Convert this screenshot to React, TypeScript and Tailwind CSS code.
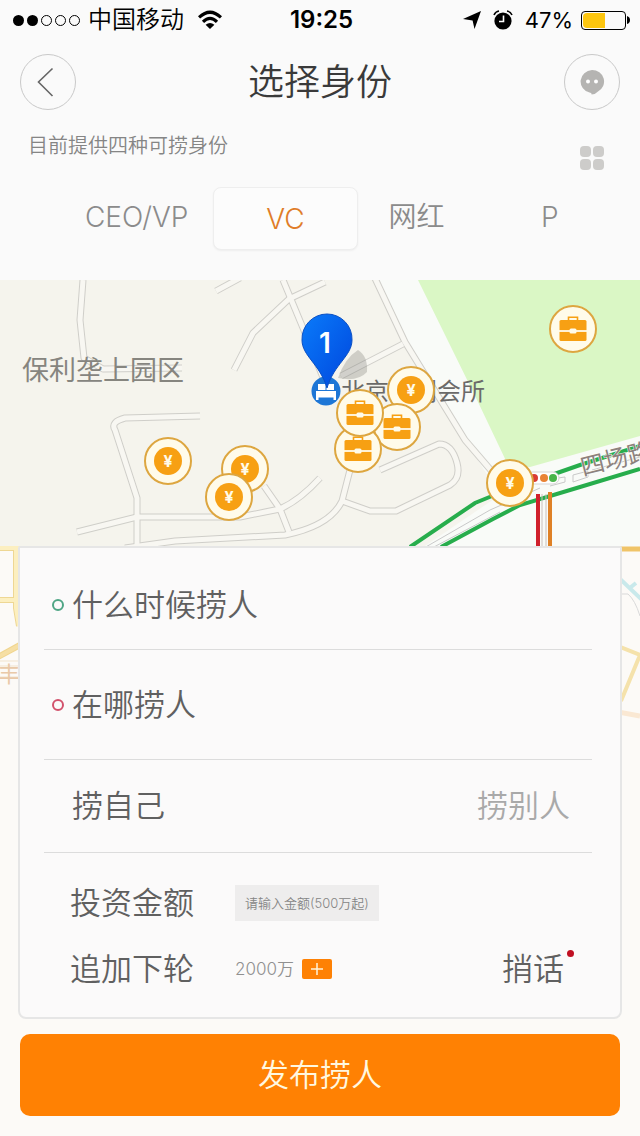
import { useState } from "react";

type Marker = { id: number; type: "coin" | "case"; x: number; y: number };

const MAP_WIDTH = 640;

const tabs = ["CEO/VP", "VC", "网红", "P"];

const markers: Marker[] = [
  { id: 1, type: "coin", x: 168, y: 181 },
  { id: 2, type: "coin", x: 245, y: 189 },
  { id: 3, type: "coin", x: 229, y: 217 },
  { id: 4, type: "coin", x: 411, y: 110 },
  { id: 5, type: "case", x: 397, y: 147 },
  { id: 6, type: "case", x: 358, y: 169 },
  { id: 7, type: "case", x: 360, y: 133 },
  { id: 8, type: "coin", x: 510, y: 203 },
  { id: 9, type: "case", x: 573, y: 49 },
];

const roads = [
  "M83 0L80 40L84 78L103 89L182 88",
  "M216 11L240 -2",
  "M234 90L253 53L289 19L325 2",
  "M283 0L303 48L326 105",
  "M372 -8L405 62L465 160L495 195",
  "M403 64L341 96",
  "M200 136L125 138Q110 142 115 150L137 218V266",
  "M77 252L137 237H240L280 229Q300 220 320 198",
  "M264 206L280 229L289 252",
  "M125 268L175 261L285 255Q330 246 342 221L351 186",
  "M342 221L370 231H396L450 205Q461 198 457 183Q452 164 439 164L380 190",
];

function StatusBar() {
  return (
    <div className="grid h-10 grid-cols-[1fr_auto_1fr] items-center pr-[10px] pl-[13px] text-black">
      <div className="flex items-center text-2xl leading-none">
        <div className="flex gap-[3px]">
          <span className="size-[11px] rounded-full bg-black" />
          <span className="size-[11px] rounded-full bg-black" />
          <span className="size-[11px] rounded-full border border-black" />
          <span className="size-[11px] rounded-full border border-black" />
          <span className="size-[11px] rounded-full border border-black" />
        </div>
        <span className="ml-2 font-[350]">中国移动</span>
        <svg className="ml-[14px] h-5 w-6" viewBox="0 0 24 20">
          <g fill="none" stroke="black" strokeWidth="3.2">
            <path d="M1 7.4Q12 -3 23 7.4" />
            <path d="M5 11.8Q12 5 19 11.8" />
          </g>
          <path d="M7.6 14.8Q12 11 16.4 14.8L12 19Z" />
        </svg>
      </div>

      <span className="text-2xl leading-none font-semibold">19:25</span>

      <div className="flex items-center justify-end text-[22px] leading-none">
        <svg className="h-5 w-[18px]" viewBox="0 0 18 20">
          <path d="M18 1L11.5 19L9.6 10.6L0 9Z" />
        </svg>
        <svg className="ml-3 size-5" viewBox="0 0 20 20">
          <circle cx="10" cy="11" r="8.6" />
          <path
            d="M1 5Q2.500 1.500 6 1M19 5Q17.500 1.500 14 1"
            fill="none"
            stroke="black"
            strokeWidth="1.6"
          />
          <path
            d="M10.500 5.500V11.500H6"
            fill="none"
            stroke="white"
            strokeWidth="1.6"
          />
        </svg>
        <span className="ml-3 font-normal">47%</span>
        <div className="ml-2 flex h-[19px] w-[45px] rounded border border-black p-px">
          <div className="w-[22px] rounded-l-sm bg-[#fdc60f]" />
        </div>
        <svg className="ml-px h-2 w-[3px]" viewBox="0 0 3 8">
          <path d="M0 0Q3 1 3 4T0 8Z" />
        </svg>
      </div>
    </div>
  );
}

function Header() {
  return (
    <header className="flex h-[84px] items-center justify-between px-5">
      <button
        aria-label="返回"
        className="flex size-14 items-center justify-center rounded-full border border-[#c9c9c9]"
      >
        <svg className="size-8" viewBox="0 0 32 32">
          <path
            d="M20.500 2.500L6.500 16L20.500 30"
            fill="none"
            stroke="#666"
            strokeWidth="1.6"
          />
        </svg>
      </button>
      <h1 className="text-4xl text-[#3a3a3a]">选择身份</h1>
      <button
        aria-label="消息"
        className="flex size-14 items-center justify-center rounded-full border border-[#c9c9c9]"
      >
        <svg className="size-7" viewBox="0 0 28 28">
          <path
            d="M14 2A12 11.500 0 0 0 11.500 24.600Q14 25 13.500 26.500Q18 26 20 23.500A12 11.500 0 0 0 14 2Z"
            fill="#b5b4b2"
          />
          <circle cx="10" cy="13.500" r="2" fill="white" />
          <circle cx="18" cy="13.500" r="2" fill="white" />
        </svg>
      </button>
    </header>
  );
}

function MapMarker({ type, x, y }: Marker) {
  return (
    <button
      aria-label={type === "coin" ? "投资人" : "职位"}
      className="absolute flex size-12 -translate-x-1/2 -translate-y-1/2 items-center justify-center rounded-full border-2 border-[#dda640] bg-[#fffbea]"
      style={{ left: `${(x / MAP_WIDTH) * 100}%`, top: y }}
    >
      {type === "coin" ? (
        <span className="flex size-7 items-center justify-center rounded-full bg-[#f7a013] text-base leading-none font-bold text-[#fffbea]">
          ¥
        </span>
      ) : (
        <svg className="size-7" viewBox="0 0 28 28">
          <path
            d="M9.500 6V2.200H18.500V6"
            fill="none"
            stroke="#f7a013"
            strokeWidth="1.600"
          />
          <rect x="0.500" y="5" width="27" height="21" rx="1.500" fill="#f7a013" />
          <path d="M0 16H28" stroke="#fffbea" strokeWidth="1.800" />
          <rect x="10.500" y="13.500" width="7" height="5" rx="1.500" fill="#fffbea" />
        </svg>
      )}
    </button>
  );
}

function CityMap() {
  return (
    <div className="relative h-[266px] overflow-hidden bg-[#f5f4ed]">
      <svg
        className="h-full w-full"
        viewBox="0 0 640 266"
        preserveAspectRatio="xMidYMid slice"
      >
        <defs>
          <linearGradient id="pin" x1="0" y1="0" x2="1" y2="1">
            <stop offset="0" stopColor="#0a7bfa" />
            <stop offset="1" stopColor="#0046dd" />
          </linearGradient>
        </defs>

        <path d="M376 0H640V266H425L500 215L465 160L405 62Z" fill="#f9fbf8" />
        <path d="M418 0H640V156L530 187L508 185L478 122Z" fill="#daf7c5" />

        <g fill="none" strokeLinejoin="round">
          {roads.map((d) => (
            <path key={d} d={d} stroke="#cfcec9" strokeWidth="7" />
          ))}
          {roads.map((d) => (
            <path key={d} d={d} stroke="#f8f7f2" strokeWidth="5" />
          ))}
        </g>

        {/* ring road with live traffic */}
        <g fill="none">
          <path
            d="M424 268L490 230L540 208M432 268L500 232M550 206L565 202V197L558 198M573 195L588 191V197L573 202ZM592 190L640 177"
            stroke="#c9c9c9"
          />
          <path
            d="M410 267L475 223L492 216L560 192L580 185L640 166M441 267L493 239L520 225L580 207L640 189"
            stroke="#27ad4c"
            strokeWidth="4"
          />
          <path d="M538 214V266" stroke="#d0202b" strokeWidth="4" />
          <path d="M542 214V266M546 214V266" stroke="#c9c0bc" />
          <path d="M550 212V266" stroke="#df8126" strokeWidth="4" />
        </g>
        <rect x="526" y="192" width="33" height="12" rx="6" fill="white" stroke="#d5d5d5" />
        <circle cx="534" cy="198" r="4" fill="#da3b34" />
        <circle cx="544" cy="198" r="4" fill="#e98335" />
        <circle cx="553" cy="198" r="4" fill="#48b44a" />
        <text
          x="583"
          y="196"
          transform="rotate(-14 583 196)"
          className="text-2xl font-normal"
          fill="#8d827d"
          stroke="#fbfbf8"
          strokeWidth="1"
          paintOrder="stroke"
        >
          四场路
        </text>

        <text x="22" y="100" className="text-[27px] font-normal" fill="#86857f">
          保利垄上园区
        </text>
        <path
          d="M338 98Q345 78 358 70Q368 76 367 92Q358 102 338 98Z"
          fill="#77776f"
          fillOpacity="0.3"
        />
        <text x="341" y="120" className="text-2xl font-normal" fill="#6b6a69">
          北京保利会所
        </text>

        <circle cx="326" cy="111" r="14.500" fill="#1d76d6" />
        <path
          d="M318 104H334V110H318ZM316 111H336V120H333.500V117.500H318.500V120H316Z"
          fill="white"
        />
        <path d="M326 104V110" stroke="#1d76d6" />
        <path
          d="M327 34A25 25 0 0 1 352 60C352 76 334 84 327 108C320 84 302 76 302 60A25 25 0 0 1 327 34Z"
          fill="url(#pin)"
          stroke="#0b50c4"
        />
        <text
          x="325"
          y="73"
          textAnchor="middle"
          className="text-[28px] font-semibold"
          fill="white"
        >
          1
        </text>
      </svg>

      {markers.map((marker) => (
        <MapMarker key={marker.id} {...marker} />
      ))}
    </div>
  );
}

function MapEdges() {
  return (
    <>
      <svg className="absolute top-0 left-0 h-[200px] w-5" viewBox="0 0 20 200">
        <g fill="none" stroke="#eed794" strokeWidth="6">
          <path d="M0 2H20M16 2V62L19 80M0 54H14" />
          <path d="M-2 111L20 99" stroke="#f0d58e" />
        </g>
        <g fill="none" stroke="#fcefc0" strokeWidth="4">
          <path d="M0 2H20M16 2V62L19 80M0 54H14" />
          <path d="M-2 111L20 99" stroke="#f6dfa4" />
        </g>
        <path d="M0 115H20M0 120H20M0 131H20" stroke="#f1e3cd" />
        <text x="-2" y="136" className="text-[22px] font-normal" fill="#e9c9a8">
          丰
        </text>
      </svg>
      <svg className="absolute top-0 right-0 h-[200px] w-[22px]" viewBox="0 0 22 200">
        <g fill="none">
          <path d="M0 3H22" stroke="#f0c468" strokeWidth="5" />
          <path d="M0 31L24 54M13 41L18 37" stroke="#c9e9eb" strokeWidth="4" />
          <path d="M0 48H10Q17 54 22 70" stroke="#d9d9d9" />
          <path d="M0 100L22 109L3 155" stroke="#f5e2ab" strokeWidth="4" />
          <path d="M0 166L22 170" stroke="#fae8d3" strokeWidth="5" />
        </g>
      </svg>
    </>
  );
}

export default function App() {
  const [activeTab, setActiveTab] = useState("VC");

  return (
    <main className="overflow-hidden bg-[#fafafa] font-['Inter','Noto_Sans_CJK_SC',sans-serif] font-[350] text-[#606060]">
      <StatusBar />
      <Header />

      <div className="flex h-[63px] items-start justify-between pr-9 pl-7">
        <p className="mt-2 text-xl text-[#858585]">目前提供四种可捞身份</p>
        <button aria-label="全部身份" className="mt-[22px] grid grid-cols-2 gap-[2px]">
          <span className="size-[11px] rounded bg-[#cdccca]" />
          <span className="size-[11px] rounded bg-[#cdccca]" />
          <span className="size-[11px] rounded bg-[#cdccca]" />
          <span className="size-[11px] rounded bg-[#cdccca]" />
        </button>
      </div>

      <nav className="grid h-[93px] grid-cols-[153fr_144fr_118fr_148fr] items-start pr-4 pl-[60px]">
        {tabs.map((tab) => (
          <button
            key={tab}
            onClick={() => setActiveTab(tab)}
            className={
              tab === activeTab
                ? "h-[63px] rounded-lg border border-[#eeeeee] bg-[#fcfcfc] text-[28px] text-[#e07c28] shadow-xs"
                : "h-[60px] text-[28px] text-[#8b8b8b]"
            }
          >
            {tab}
          </button>
        ))}
      </nav>

      <CityMap />

      <div className="relative bg-[#fcfaf7] pb-5">
        <MapEdges />

        <form
          onSubmit={(e) => e.preventDefault()}
          className="relative mx-[18px]"
        >
          <div className="rounded-t-xs rounded-b-lg border-2 border-[#e6e6e6] bg-[#fbfafa] pr-7 pb-[30px] pl-6 text-[31px] leading-9">
            <button
              type="button"
              className="flex h-[102px] w-full items-center gap-2 border-b border-[#dcdcdc] pt-3 pl-2"
            >
              <span className="size-3 rounded-full border-2 border-[#4fa585]" />
              什么时候捞人
            </button>
            <button
              type="button"
              className="flex h-[110px] w-full items-center gap-2 border-b border-[#dcdcdc] pl-2"
            >
              <span className="size-3 rounded-full border-2 border-[#d2526c]" />
              在哪捞人
            </button>

            <div className="flex h-[93px] items-center justify-between border-b border-[#dcdcdc] pr-[22px] pl-7">
              <label className="text-[#a9a9a9] has-checked:text-[#606060]">
                <input
                  type="radio"
                  name="target"
                  defaultChecked
                  className="sr-only"
                />
                捞自己
              </label>
              <label className="text-[#a9a9a9] has-checked:text-[#606060]">
                <input type="radio" name="target" className="sr-only" />
                捞别人
              </label>
            </div>

            <div className="pt-8 pr-7 pl-[26px]">
              <div className="flex items-center">
                <label htmlFor="amount" className="w-[165px]">
                  投资金额
                </label>
                <input
                  id="amount"
                  placeholder="请输入金额(500万起)"
                  className="h-9 w-36 bg-[#eeeded] px-[10px] text-[13px] placeholder:text-[#858585]"
                />
              </div>

              <div className="mt-[30px] flex items-center">
                <span className="w-[165px]">追加下轮</span>
                <span className="text-[17px] text-[#909090]">2000万</span>
                <button
                  type="button"
                  aria-label="追加"
                  className="ml-2 flex h-5 w-[30px] items-center justify-center rounded-xs bg-[#fe8104]"
                >
                  <svg className="size-3" viewBox="0 0 12 12">
                    <path d="M0 6H12M6 0V12" stroke="#fff3d8" strokeWidth="1.500" />
                  </svg>
                </button>
                <button type="button" className="relative ml-auto">
                  捎话
                  <span className="absolute -top-px -right-[10px] size-[7px] rounded-full bg-[#c00f22]" />
                </button>
              </div>
            </div>
          </div>

          <div className="mt-[15px] px-0.5">
            <button className="h-[82px] w-full rounded-[10px] bg-[#ff8103] text-[31px] text-[#fff8e0]">
              发布捞人
            </button>
          </div>
        </form>
      </div>
    </main>
  );
}
